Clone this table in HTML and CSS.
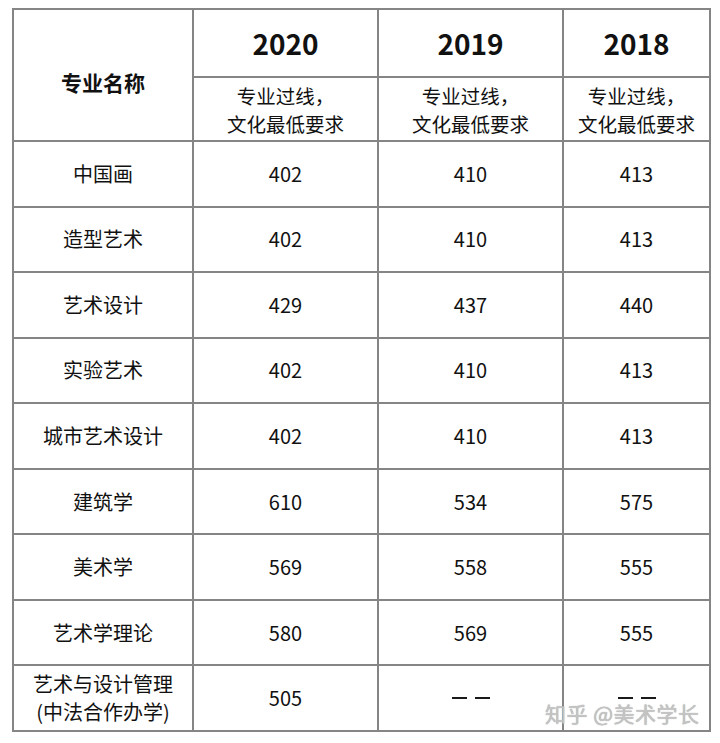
FILE: index.html
```html
<!DOCTYPE html>
<html lang="zh-CN">
<head>
<meta charset="utf-8">
<title>专业名称</title>
<link rel="stylesheet" href="styles.css">
</head>
<body>
<div class="page">
  <div class="grid">
    <div class="cell head-name">专业名称</div>
    <div class="cell year">2020</div>
    <div class="cell year">2019</div>
    <div class="cell year">2018</div>
    <div class="cell sub"><span class="ln">专业过线，</span><span class="ln">文化最低要求</span></div>
    <div class="cell sub"><span class="ln">专业过线，</span><span class="ln">文化最低要求</span></div>
    <div class="cell sub"><span class="ln">专业过线，</span><span class="ln">文化最低要求</span></div>

    <div class="cell">中国画</div><div class="cell">402</div><div class="cell">410</div><div class="cell">413</div>
    <div class="cell">造型艺术</div><div class="cell">402</div><div class="cell">410</div><div class="cell">413</div>
    <div class="cell">艺术设计</div><div class="cell">429</div><div class="cell">437</div><div class="cell">440</div>
    <div class="cell">实验艺术</div><div class="cell">402</div><div class="cell">410</div><div class="cell">413</div>
    <div class="cell">城市艺术设计</div><div class="cell">402</div><div class="cell">410</div><div class="cell">413</div>
    <div class="cell">建筑学</div><div class="cell">610</div><div class="cell">534</div><div class="cell">575</div>
    <div class="cell">美术学</div><div class="cell">569</div><div class="cell">558</div><div class="cell">555</div>
    <div class="cell">艺术学理论</div><div class="cell">580</div><div class="cell">569</div><div class="cell">555</div>
    <div class="cell two"><span class="ln">艺术与设计管理</span><span class="ln">(中法合作办学)</span></div><div class="cell">505</div>
    <div class="cell dashes"><span class="dash"></span><span class="dash"></span></div>
    <div class="cell dashes"><span class="dash"></span><span class="dash"></span></div>
  </div>
  <div class="watermark">知乎 @美术学长</div>
</div>
</body>
</html>
```
FILE: styles.css
```css
html, body {
  margin: 0;
  padding: 0;
  background: #ffffff;
}
body {
  font-family: "Noto Sans CJK SC", "Noto Sans", sans-serif;
  color: #111111;
}
.page {
  position: relative;
  width: 720px;
  height: 743px;
  padding: 8px 0 0 12px;
  box-sizing: border-box;
}
.grid {
  display: grid;
  grid-template-columns: 178px 183px 183px 145px;
  grid-template-rows: 66px 62px repeat(9, 1fr);
  gap: 2px;
  padding: 2px;
  width: 699px;
  height: 724px;
  box-sizing: border-box;
  background: #858585;
}
.cell {
  background: #ffffff;
  display: flex;
  flex-direction: column;
  align-items: center;
  justify-content: center;
  text-align: center;
  font-size: 20px;
  line-height: 28px;
  font-weight: 400;
}
.ln {
  display: block;
  line-height: 28px;
}
.head-name {
  grid-row: span 2;
  font-weight: 700;
  font-size: 21px;
  padding-top: 14px;
  box-sizing: border-box;
}
.year {
  font-weight: 700;
  font-size: 28px;
  line-height: 40px;
}
.sub {
  font-size: 19.5px;
  padding-top: 1px;
  box-sizing: border-box;
}
.dashes {
  flex-direction: row;
  gap: 8px;
  padding-bottom: 1px;
  box-sizing: border-box;
}
.dash {
  display: block;
  width: 15px;
  height: 2px;
  background: #1a1a1a;
}
.watermark {
  position: absolute;
  left: 545px;
  top: 699px;
  font-size: 21px;
  line-height: 28px;
  color: #c4c4c4;
  letter-spacing: 0.5px;
  text-shadow: 0 0 1px #9a9a9a;
}
```
